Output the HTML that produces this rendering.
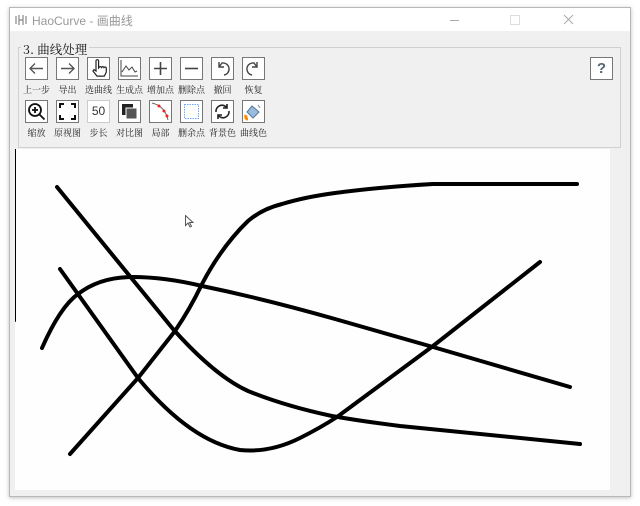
<!DOCTYPE html>
<html><head><meta charset="utf-8"><style>
*{margin:0;padding:0;box-sizing:border-box}
body{width:640px;height:506px;background:#fff;position:relative;overflow:hidden;font-family:"Liberation Sans","Noto Sans CJK SC",sans-serif}
.win{position:absolute;left:9px;top:7px;width:622px;height:490px;background:#f0f0f0;border:1px solid #b8b8b8;box-shadow:0 1px 4px rgba(0,0,0,.25)}
.tb{position:absolute;left:0;top:0;width:620px;height:23px;background:#fff}
.title{position:absolute;left:22px;top:4px;font-size:12px;color:#999}
.gb{position:absolute;left:8px;top:39px;width:603px;height:101px;border:1px solid #d0d0d0}
.gl{position:absolute;left:11px;top:32px;background:#f0f0f0;font-size:12.5px;color:#111;padding:0 2px;font-family:"Noto Serif CJK SC",serif}
.b{position:absolute;width:23px;height:23px;background:#fff;border:1px solid #777}
.l{position:absolute;width:31px;text-align:center;font-size:9px;color:#222;font-family:"Noto Serif CJK SC",serif}
.cv{position:absolute;left:5px;top:141px;width:595px;height:341px;background:#fefefe}
</style></head><body>
<div class="win">
<div class="tb">
<svg style="position:absolute;left:5px;top:6px" width="12" height="12" viewBox="0 0 12 12" fill="none" stroke="#888" stroke-width="1.2"><path d="M1 2v8M4 1v10M8 1v10M11 2v8M4 6h4"/></svg>
<div class="title">HaoCurve - 画曲线</div>
<svg style="position:absolute;left:440px;top:6px" width="170" height="12" fill="none" stroke="#aaa"><path d="M0 6.5h9"/><rect x="60.5" y="1.5" width="9" height="9" stroke="#ddd"/><path d="M114 1l9 9M123 1l-9 9"/></svg>
</div>
<div class="gb"></div>
<div class="gl">3. 曲线处理</div>
<div class="b" style="left:15px;top:49px"><svg width="21" height="21" fill="none" stroke="#555" stroke-width="1.4"><path d="M4 10.5h13M9 5.5l-5 5 5 5"/></svg></div>
<div class="b" style="left:46px;top:49px"><svg width="21" height="21" fill="none" stroke="#555" stroke-width="1.4"><path d="M4 10.5h13M12 5.5l5 5-5 5"/></svg></div>
<div class="b" style="left:77px;top:49px"><svg width="21" height="21" fill="none" stroke="#222" stroke-width="1.2"><path d="M8 13V3a1.3 1.3 0 0 1 2.6 0v7l1-1a1.2 1.2 0 0 1 2 .5l.4-.5a1.2 1.2 0 0 1 2 .6l.3-.3a1.2 1.2 0 0 1 2 .8v4l-2 4H9l-4-5 1-1.5z"/></svg></div>
<div class="b" style="left:108px;top:49px"><svg width="21" height="21" fill="none" stroke="#444" stroke-width="1"><path d="M2 2v16h17"/><path d="M3 14l4-6 3 4 3-3 3 5 2-1"/></svg></div>
<div class="b" style="left:139px;top:49px"><svg width="21" height="21" fill="none" stroke="#444" stroke-width="1.6"><path d="M10.5 4v13M4 10.5h13"/></svg></div>
<div class="b" style="left:170px;top:49px"><svg width="21" height="21" fill="none" stroke="#444" stroke-width="1.6"><path d="M4 10.5h13"/></svg></div>
<div class="b" style="left:201px;top:49px"><svg width="21" height="21" fill="none" stroke="#444" stroke-width="1.4"><path d="M7 4v5h5M7 9l3-4a5 5 0 1 1 2 12"/></svg></div>
<div class="b" style="left:232px;top:49px"><svg width="21" height="21" fill="none" stroke="#444" stroke-width="1.4"><path d="M14 4v5H9M14 9l-3-4a5 5 0 1 0-2 12"/></svg></div>
<div class="l" style="left:11px;top:75px">上一步</div>
<div class="l" style="left:42px;top:75px">导出</div>
<div class="l" style="left:73px;top:75px">选曲线</div>
<div class="l" style="left:104px;top:75px">生成点</div>
<div class="l" style="left:135px;top:75px">增加点</div>
<div class="l" style="left:166px;top:75px">删除点</div>
<div class="l" style="left:197px;top:75px">撤回</div>
<div class="l" style="left:228px;top:75px">恢复</div>
<div class="b" style="left:15px;top:92px"><svg width="21" height="21" fill="none" stroke="#111" stroke-width="1.8"><circle cx="9" cy="9" r="6"/><path d="M13.5 13.5l5 5M9 6v6M6 9h6"/></svg></div>
<div class="b" style="left:46px;top:92px"><svg width="21" height="21" fill="none" stroke="#111" stroke-width="2"><path d="M3 7V3h4M14 3h4v4M18 14v4h-4M7 18H3v-4"/></svg></div>
<div class="b" style="left:77px;top:92px;border-color:#ccc;font-size:12px;text-align:center;line-height:21px;color:#333">50</div>
<div class="b" style="left:108px;top:92px"><svg width="21" height="21"><rect x="3" y="3" width="11" height="11" fill="#222"/><rect x="7" y="7" width="11" height="11" fill="#555" stroke="#fff" stroke-width="1"/></svg></div>
<div class="b" style="left:139px;top:92px"><svg width="21" height="21" fill="none"><path d="M2 2q13 3 16 17" stroke="#666"/><circle cx="9" cy="5" r="1.5" fill="#e22"/><circle cx="14" cy="10" r="1.5" fill="#e22"/><circle cx="17" cy="15" r="1.5" fill="#e22"/></svg></div>
<div class="b" style="left:170px;top:92px"><svg width="21" height="21" fill="none"><rect x="3.5" y="3.5" width="14" height="14" stroke="#6af" stroke-dasharray="1.5 1"/></svg></div>
<div class="b" style="left:201px;top:92px"><svg width="21" height="21" fill="none" stroke="#222" stroke-width="1.6"><path d="M4 11a6 6 0 0 1 11-4M15 3v4h-4M17 10a6 6 0 0 1-11 4M6 18v-4h4"/></svg></div>
<div class="b" style="left:232px;top:92px"><svg width="21" height="21"><path d="M9 5l7 6-6 6-6-6z" fill="#9bd" stroke="#579"/><path d="M3 14q-1 4 2 4" stroke="#f80" stroke-width="3" fill="none"/><path d="M15 4l2 3" stroke="#789"/></svg></div>
<div class="l" style="left:11px;top:118px">缩放</div>
<div class="l" style="left:42px;top:118px">原视图</div>
<div class="l" style="left:73px;top:118px">步长</div>
<div class="l" style="left:104px;top:118px">对比图</div>
<div class="l" style="left:135px;top:118px">局部</div>
<div class="l" style="left:166px;top:118px">删余点</div>
<div class="l" style="left:197px;top:118px">背景色</div>
<div class="l" style="left:228px;top:118px">曲线色</div>
<div class="b" style="left:580px;top:49px;font:bold 15px 'Liberation Sans',sans-serif;color:#567;text-align:center;line-height:21px">?</div>
<div class="cv">
<svg width="595" height="341" viewBox="15 148 595 341" fill="none" stroke="#000" stroke-width="4" stroke-linecap="round" stroke-linejoin="round">
<path d="M15 148V320" stroke-width="2"/>
<path d="M70 453L138 377L175 330Q190 308 202 283Q222 245 248 220Q262 208 282 203Q305 196 335 192Q380 186 433 183L577 183"/>
<path d="M57 186L173 328Q215 375 248 390Q285 405 332 415Q360 420 400 425L580 443"/>
<path d="M60 268L138 377Q190 440 240 449Q270 452 300 437Q320 427 337 416L433 345L540 261"/>
<path d="M42 347Q60 306 78 293Q100 276 132 276Q165 276 202 285Q265 298 335 318L433 346L570 386"/>
</svg>
<svg style="position:absolute;left:170px;top:66px" width="9" height="13"><path d="M.5.5v10l2.5-2.5 2 4 1.5-.7-2-3.8h3.5z" fill="#fff" stroke="#555"/></svg>
</div>
</div>
</body></html>
